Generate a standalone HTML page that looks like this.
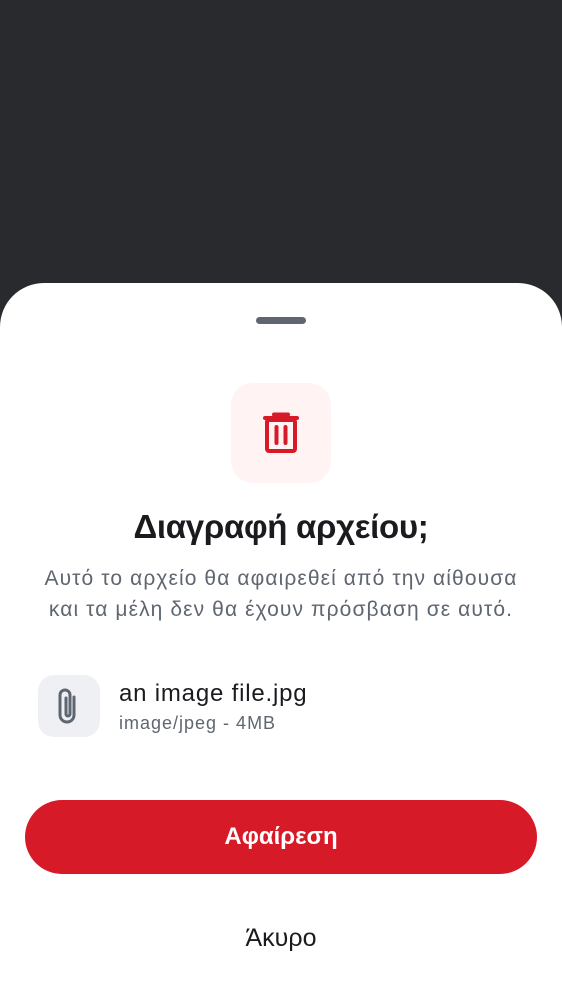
<!DOCTYPE html>
<html><head><meta charset="utf-8"><style>
body{margin:0;width:562px;height:1000px;background:#292a2d;position:relative;overflow:hidden;font-family:"Liberation Sans",sans-serif;}
.sheet{position:absolute;left:0;top:283px;width:562px;height:717px;background:#fff;border-radius:44px 44px 0 0;}
.handle{position:absolute;left:256px;top:34px;width:50px;height:7px;border-radius:4px;background:#5f6670;}
.ibox{position:absolute;left:231px;top:100px;width:100px;height:100px;border-radius:22px;background:#fff4f3;}
h1{position:absolute;top:225px;left:0;width:562px;margin:0;text-align:center;font-size:33px;font-weight:bold;color:#1b1b1f;letter-spacing:-0.3px}
.desc{position:absolute;top:280px;left:0;width:562px;text-align:center;font-size:21px;letter-spacing:1.1px;line-height:31px;color:#5f6670;}
.fbox{position:absolute;left:38px;top:392px;width:62px;height:62px;border-radius:16px;background:#eef0f3;}
.fn{position:absolute;left:119px;top:397px;font-size:24px;letter-spacing:0.8px;color:#1b1b1f;}
.fm{position:absolute;left:119px;top:430px;font-size:18px;letter-spacing:1px;color:#5f6670;}
.btn{position:absolute;left:25px;top:517px;width:512px;height:74px;border-radius:37px;background:#d71a28;color:#fff;font-size:24px;font-weight:bold;text-align:center;line-height:74px;}
.cancel{position:absolute;left:0;top:641px;width:562px;text-align:center;font-size:25px;color:#1b1b1f;}
</style></head><body>
<div class="sheet">
<div class="handle"></div>
<div class="ibox"><svg width="100" height="100" viewBox="0 0 100 100">
<path d="M43 31.5h14" stroke="#d71a28" stroke-width="4" stroke-linecap="round"/>
<path d="M34 35h32" stroke="#d71a28" stroke-width="4" stroke-linecap="round"/>
<rect x="36" y="37" width="28" height="31" rx="2" fill="none" stroke="#d71a28" stroke-width="4"/>
<path d="M45.5 44v16M54.5 44v16" stroke="#d71a28" stroke-width="4" stroke-linecap="round"/>
</svg></div>
<h1>Διαγραφή αρχείου;</h1>
<div class="desc">Αυτό το αρχείο θα αφαιρεθεί από την αίθουσα<br>και τα μέλη δεν θα έχουν πρόσβαση σε αυτό.</div>
<div class="fbox"><svg width="62" height="62" viewBox="0 0 62 62">
<path d="M36 22v18a7 7 0 0 1-14 0V20a5 5 0 0 1 10 0v19a2 2 0 0 1-4 0V23" fill="none" stroke="#5f6670" stroke-width="3" stroke-linecap="round"/>
</svg></div>
<div class="fn">an image file.jpg</div>
<div class="fm">image/jpeg - 4MB</div>
<div class="btn">Αφαίρεση</div>
<div class="cancel">Άκυρο</div>
</div>
</body></html>
